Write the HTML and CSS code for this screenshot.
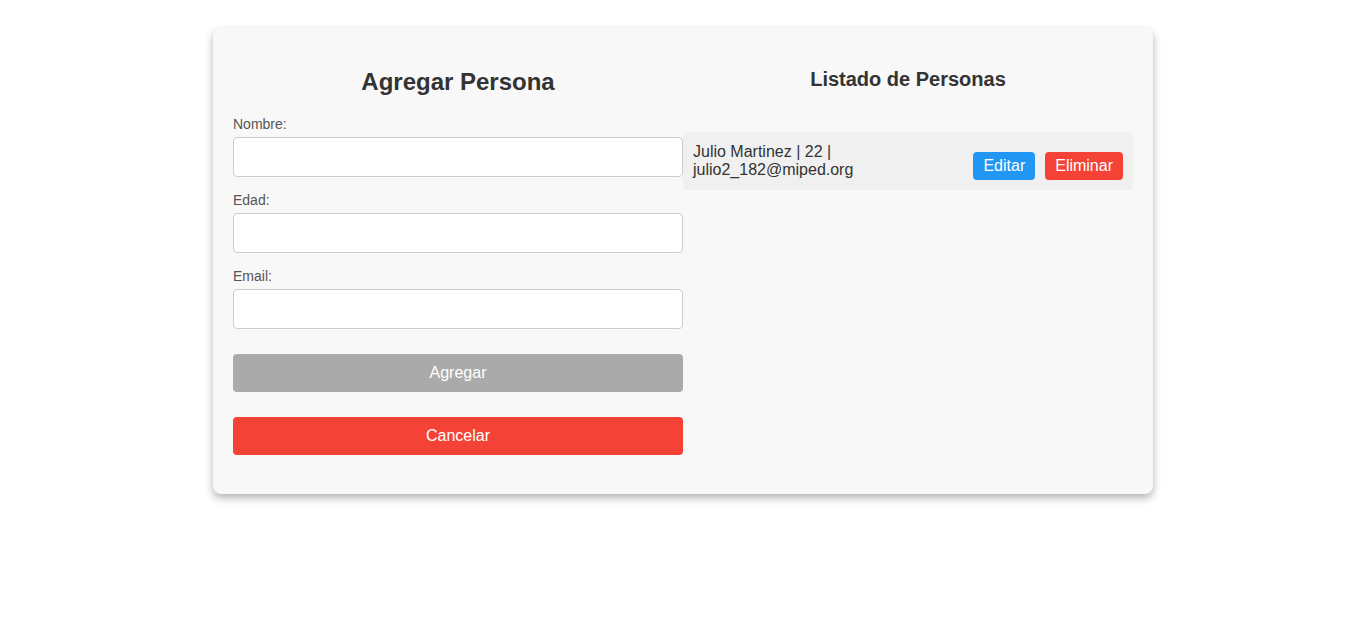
FILE: index.html
```html
<!DOCTYPE html>
<html lang="es">
<head>
<meta charset="utf-8">
<title>Personas</title>
<link rel="stylesheet" href="styles.css">
</head>
<body>
<div class="card">
  <div class="col form-col">
    <h2 class="title">Agregar Persona</h2>
    <div class="group">
      <label class="label">Nombre:</label>
      <input class="input" type="text">
    </div>
    <div class="group">
      <label class="label">Edad:</label>
      <input class="input" type="text">
    </div>
    <div class="group">
      <label class="label">Email:</label>
      <input class="input" type="text">
    </div>
    <button class="btn btn-add">Agregar</button>
    <button class="btn btn-cancel">Cancelar</button>
  </div>
  <div class="col list-col">
    <h3 class="subtitle">Listado de Personas</h3>
    <ul class="list">
      <li class="item">
        <span class="item-text">Julio Martinez | 22 | julio2_182@miped.org</span>
        <div class="actions">
          <button class="sbtn sbtn-edit">Editar</button>
          <button class="sbtn sbtn-del">Eliminar</button>
        </div>
      </li>
    </ul>
  </div>
</div>
</body>
</html>
```
FILE: styles.css
```css
* { box-sizing: border-box; }
html, body { min-height: 100%; }
body {
  margin: 0;
  padding: 28px 0 60px;
  background: #fff;
  font-family: "Liberation Sans", Arial, sans-serif;
  color: #333;
}
.card {
  width: 940px;
  margin: 0 auto;
  padding: 20px;
  background: #f8f8f8;
  border-radius: 8px;
  box-shadow: 0 4px 8px rgba(0,0,0,0.3);
  display: flex;
}
.col { flex: 1 1 0; min-width: 0; }
.form-col { padding-bottom: 19px; }
.title {
  margin: 20px 0 20px;
  font-size: 24px;
  line-height: 28px;
  text-align: center;
  color: #333;
}
.group { margin-bottom: 15px; }
.label {
  display: block;
  font-size: 14px;
  line-height: 16px;
  color: #555;
  margin-bottom: 5px;
}
.input {
  display: block;
  width: 100%;
  height: 40px;
  border: 1px solid #ccc;
  border-radius: 4px;
  background: #fff;
  font-size: 16px;
  padding: 0 10px;
}
.btn {
  display: block;
  width: 100%;
  height: 38px;
  border: none;
  border-radius: 4px;
  color: #fff;
  font-family: inherit;
  font-size: 16px;
  margin-top: 25px;
}
.btn-add { background: #aaa; }
.btn-cancel { background: #f44336; }
.subtitle {
  margin: 20px 0 0;
  font-size: 20px;
  line-height: 23px;
  text-align: center;
  color: #333;
}
.list {
  list-style: none;
  margin: 41px 0 0;
  padding: 0;
}
.item {
  display: flex;
  align-items: center;
  justify-content: space-between;
  background: #f0f0f0;
  border-radius: 4px;
  padding: 10px;
  min-height: 58px;
  font-size: 16px;
  line-height: 18px;
  color: #333;
}
.item-text { flex: 1 1 auto; }
.actions { display: flex; gap: 10px; flex: none; align-self: flex-end; }
.sbtn {
  height: 28px;
  border: none;
  border-radius: 4px;
  color: #fff;
  font-family: inherit;
  font-size: 16px;
  padding: 0 10px;
}
.sbtn-edit { background: #2196f3; }
.sbtn-del { background: #f44336; }
```
